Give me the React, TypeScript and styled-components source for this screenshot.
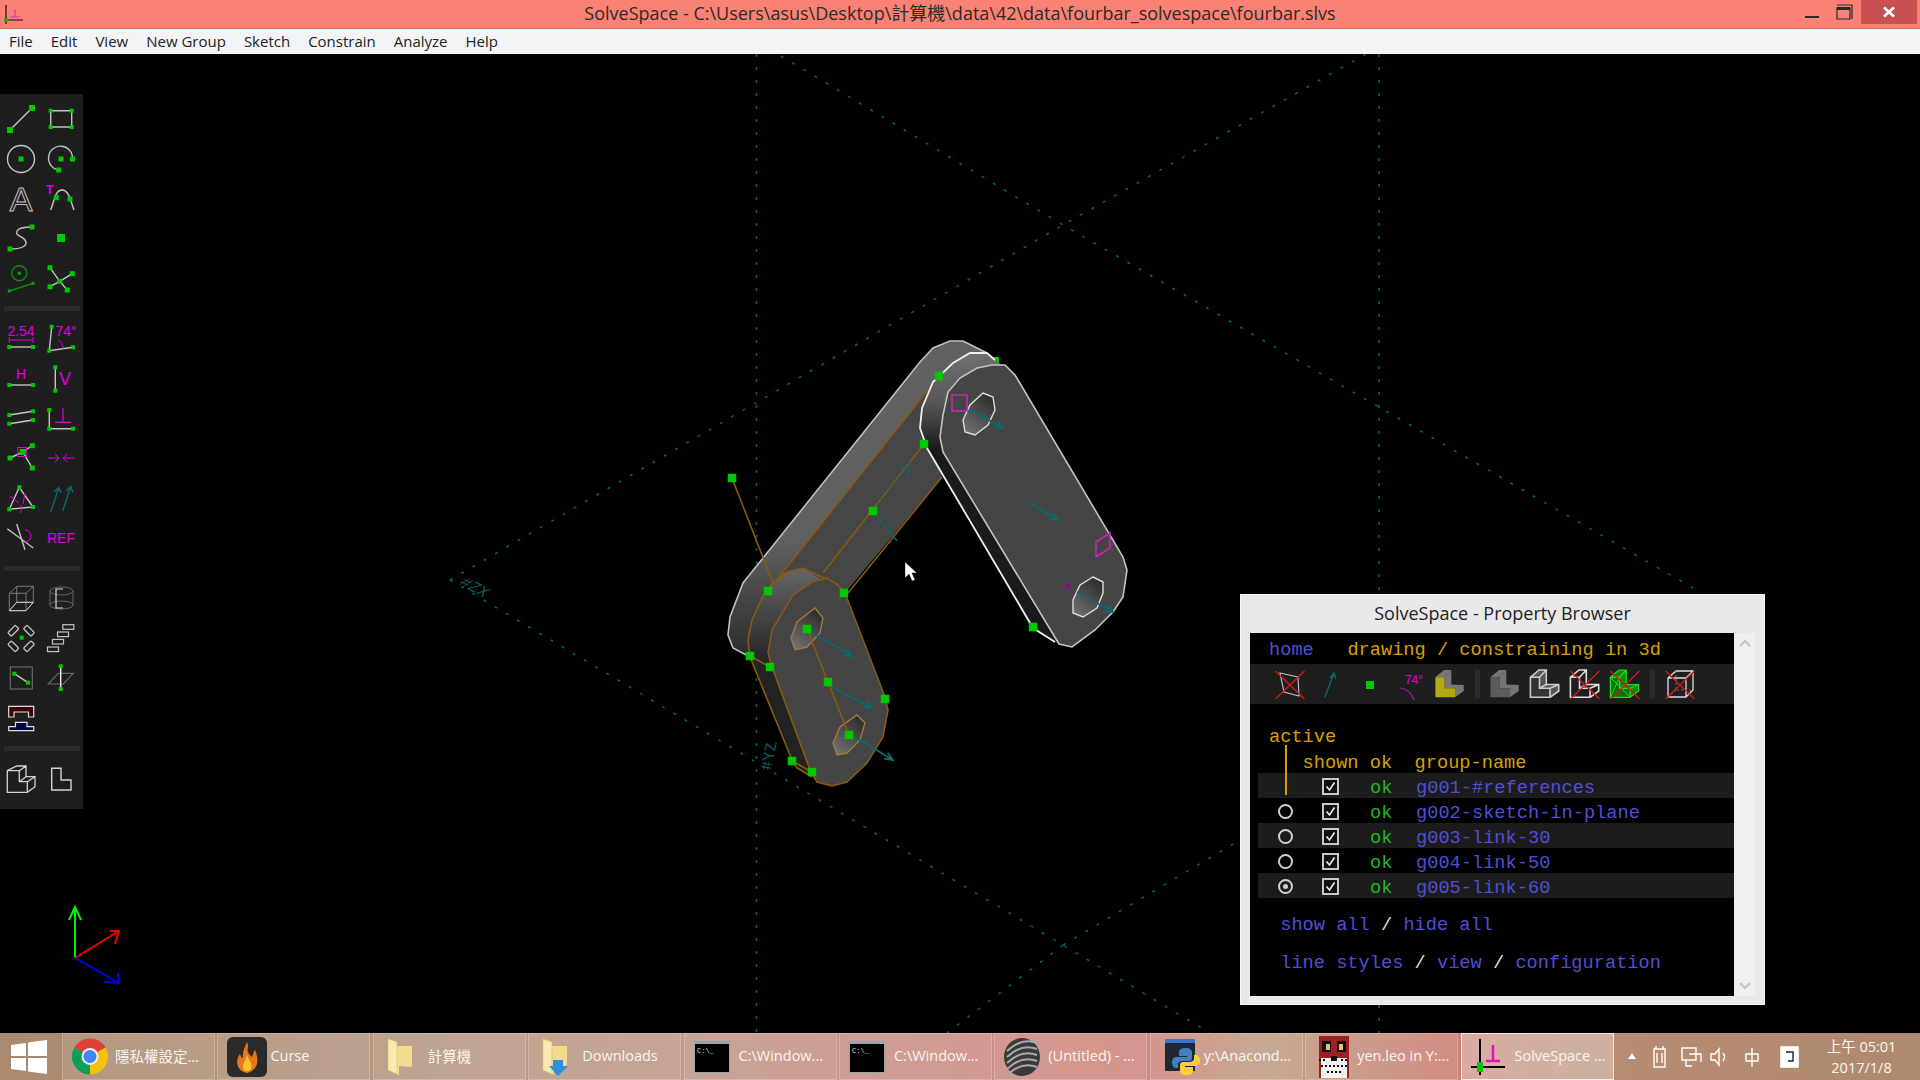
import { ReactNode } from "react";
import styled, { createGlobalStyle } from "styled-components";

const GlobalStyle = createGlobalStyle`
  html, body {
    margin: 0;
    padding: 0;
    background: #000;
    overflow: hidden;
  }
`;

const uiFont = `"Open Sans", "Noto Sans CJK TC", sans-serif`;
const GREEN = "#00c800";
const GRAY = "#c4c4c4";
const MAG = "#e000e0";
const TEAL = "#0b6b6e";
const ORANGE = "#8a5a12";

/* ---------- small svg helpers ---------- */

const Sq = ({ x, y, s = 6, c = GREEN }: { x: number; y: number; s?: number; c?: string }) => (
  <rect x={x - s / 2} y={y - s / 2} width={s} height={s} fill={c} />
);

const L = ({ d, c = GRAY, w = 1.4, dash }: { d: string; c?: string; w?: number; dash?: string }) => (
  <path d={d} fill="none" stroke={c} strokeWidth={w} strokeDasharray={dash} />
);

const Lbl = ({ x, y, size, children, c = MAG, bold }: { x: number; y: number; size: number; children: ReactNode; c?: string; bold?: boolean }) => (
  <text x={x} y={y} fontSize={size} fill={c} textAnchor="middle" fontFamily="'Liberation Sans', sans-serif" fontWeight={bold ? 700 : 400}>
    {children}
  </text>
);

const ToolSvg = styled.svg`
  width: 40px;
  height: 40px;
  display: block;
`;

const Tool = ({ children }: { children?: ReactNode }) => <ToolSvg viewBox="0 0 40 40">{children}</ToolSvg>;

/* ---------- toolbar icons, one row per pair ---------- */

const toolRows: ReactNode[][] = [
  [
    [
      <Tool key="line"><L d="M9 32L31 10" /><Sq x={9} y={32} /><Sq x={31} y={10} /></Tool>,
      <Tool key="rect"><L d="M9.7 12.7H30.7V29H9.7Z" /><Sq x={9.7} y={12.7} s={4} /><Sq x={30.7} y={12.7} s={4} /><Sq x={9.7} y={29} s={4} /><Sq x={30.7} y={29} s={4} /></Tool>,
    ],
    [
      <Tool key="circle"><circle cx={20} cy={21} r={13.5} fill="none" stroke={GRAY} strokeWidth={1.4} /><Sq x={20} y={21} s={5} /></Tool>,
      <Tool key="arc"><L d="M31.5 21A12 12 0 1 0 17.7 32" /><Sq x={20} y={21} s={5} /><Sq x={31.5} y={21} s={5} /><Sq x={17.7} y={32} s={5} /></Tool>,
    ],
    [
      <Tool key="text"><text x={20} y={33} fontSize={34} textAnchor="middle" fill="none" stroke={GRAY} strokeWidth={1} fontFamily="'Liberation Sans', sans-serif">A</text></Tool>,
      <Tool key="ttf"><L d="M9.7 32C13 24 14 12 21 12C28 12 30 24 33 32" /><Sq x={15.3} y={19.7} s={5} /><Sq x={29} y={21} s={5} /><Lbl x={9} y={16} size={12} bold>T</Lbl></Tool>,
    ],
    [
      <Tool key="spline"><L d="M9 31C20 31 28 28 24 22C20 17 14 18 16 13C18 9 26 9 31 9" /><Sq x={9} y={31} s={5} /><Sq x={31} y={9} s={5} /></Tool>,
      <Tool key="point"><Sq x={20} y={20} s={8} /></Tool>,
    ],
    [
      <Tool key="wplane"><circle cx={18.3} cy={15.3} r={7.5} fill="none" stroke="#0b8f0b" strokeWidth={1.4} /><Sq x={18.3} y={15.3} s={3} c="#0b9f0b" /><L d="M8.3 33L32 25.3" c="#0b8f0b" /><Sq x={8.3} y={33} s={3} c="#0b9f0b" /><Sq x={32} y={25.3} s={3} c="#0b9f0b" /></Tool>,
      <Tool key="split"><L d="M9 9.7L18.7 23.3L26.3 32M9 28.7L18.7 23.3L31.3 15.7" /><Sq x={18.7} y={23.3} s={5} /><Sq x={9} y={9.7} s={5} /><Sq x={31.3} y={15.7} s={5} /><Sq x={9} y={28.7} s={5} /><Sq x={26.3} y={32} s={5} /></Tool>,
    ],
  ],
  [
    [
      <Tool key="dist"><Lbl x={20} y={18} size={14}>2.54</Lbl><L d="M8.3 22H32M8.3 19V25M32 19V25" c={MAG} w={1} /><L d="M8.3 29H32" /><Sq x={8.3} y={29} s={4} /><Sq x={32} y={29} s={4} /></Tool>,
      <Tool key="angle"><L d="M10.7 8.7L8.3 32.7L32 29.3" /><L d="M17.3 22Q22 25 22.3 30.5" c={MAG} w={1} /><Sq x={10.7} y={8.7} s={4} /><Sq x={8.3} y={32.7} s={4} /><Sq x={32} y={29.3} s={4} /><Lbl x={25} y={18} size={14}>74°</Lbl></Tool>,
    ],
    [
      <Tool key="h"><Lbl x={20} y={21} size={14}>H</Lbl><L d="M8.3 27H32" /><Sq x={8.3} y={27} s={4} /><Sq x={32} y={27} s={4} /></Tool>,
      <Tool key="v"><L d="M14.3 9.3V32.7" /><Sq x={14.3} y={9.3} s={4} /><Sq x={14.3} y={32.7} s={4} /><Lbl x={24} y={27} size={18}>V</Lbl></Tool>,
    ],
    [
      <Tool key="par"><L d="M8.3 17L32 13.3M8.3 25.7L32 22" /><Sq x={8.3} y={17} s={4} /><Sq x={32} y={13.3} s={4} /><Sq x={8.3} y={25.7} s={4} /><Sq x={32} y={22} s={4} /></Tool>,
      <Tool key="perp"><L d="M8.3 12V30.7H32" /><L d="M14 24.3H30M22 10V24.3" c={MAG} w={1.2} /><Sq x={8.3} y={12} s={4} /><Sq x={8.3} y={30.7} s={4} /><Sq x={32} y={30.7} s={4} /></Tool>,
    ],
    [
      <Tool key="oncurve"><L d="M9 20L21.7 14L31.3 30M21.7 14L31.3 7.7" /><rect x={16.7} y={9.5} width={9} height={9} fill="none" stroke={MAG} strokeWidth={1} /><Sq x={21.7} y={14} s={6} /><Sq x={9} y={20} s={5} /><Sq x={31.3} y={7.7} s={5} /><Sq x={31.3} y={30} s={5} /></Tool>,
      <Tool key="equal"><L d="M6.7 20H18M14 16L18 20L14 24M33.7 20H22.3M26.3 16L22.3 20L26.3 24" c={MAG} w={1} /></Tool>,
    ],
    [
      <Tool key="tri"><L d="M18.3 9.3L8.3 31.3L32 29Z" /><L d="M9 18L18 25M24 15L22 26M20 27V35" c={MAG} w={1} /><Sq x={18.3} y={9.3} s={4} /><Sq x={8.3} y={31.3} s={4} /><Sq x={32} y={29} s={4} /></Tool>,
      <Tool key="para3d"><L d="M9.7 34.3L17.7 9.7M13 14L17.7 9.7L20 15M21.7 33L29.7 8.7M25 13L29.7 8.7L32 14.5" c={TEAL} w={1.4} /></Tool>,
    ],
    [
      <Tool key="other"><L d="M6.3 10.7L32.3 30M15.7 6L24 31.7" /><L d="M24 12A6 6 0 0 1 24 24" c={MAG} w={1} /></Tool>,
      <Tool key="ref"><Lbl x={20} y={25} size={14}>REF</Lbl></Tool>,
    ],
  ],
  [
    [
      <Tool key="cube"><L d="M8.3 15.3L15.7 8.3H32.3V24.3L25 32.7H8.3ZM8.3 15.3H25V32.7M25 15.3L32.3 8.3M15.7 8.3V24.3H32.3M15.7 24.3L8.3 32.7" c="#777" w={1} /><L d="M8.3 32.7H25L32.3 24.3H15.7Z" c="#d0d0d0" w={1} /></Tool>,
      <Tool key="cyl"><ellipse cx={20.5} cy={13} rx={11.5} ry={4} fill="none" stroke="#666" /><ellipse cx={20.5} cy={27} rx={11.5} ry={4} fill="none" stroke="#666" /><L d="M9 13V27M32 13V27" c="#666" w={1} /><L d="M22 11H15V30H22M15 18V23" c="#d8d8d8" w={1.2} /></Tool>,
    ],
    [
      <Tool key="near">
        {[[12.3, 12.7, 45], [28, 12.7, -45], [12.3, 28.3, -45], [28, 28.3, 45]].map(([x, y, r]) => (
          <rect key={`${x}${y}`} x={x - 2.5} y={y - 5.3} width={5} height={10.6} rx={1} fill="none" stroke={GRAY} strokeWidth={1.3} transform={`rotate(${r} ${x} ${y})`} />
        ))}
        <Sq x={20.7} y={19.7} s={4} />
      </Tool>,
      <Tool key="steps">
        {[[27.3, 9], [22, 16.3], [17, 23.7], [12, 31.3]].map(([x, y]) => (
          <rect key={x} x={x - 5.5} y={y - 2.3} width={11} height={4.6} fill="none" stroke={GRAY} strokeWidth={1.2} />
        ))}
      </Tool>,
    ],
    [
      <Tool key="inplane"><rect x={9.3} y={9} width={22} height={22} fill="none" stroke="#666" strokeWidth={1.2} /><L d="M13.3 15.7L27 24.7" /><Sq x={13.3} y={15.7} s={4} /><Sq x={27} y={24.7} s={4} /></Tool>,
      <Tool key="norm"><L d="M7.3 26L17.3 15.3H32.3L22.3 26Z" c="#666" w={1.2} /><L d="M19.7 8.3V31" c="#eee" /><Sq x={19.7} y={8.3} s={4} /><Sq x={19.7} y={31} s={4} /></Tool>,
    ],
    [
      <Tool key="bridge"><path d="M7.7 8.3H32.7V19H27.5V14H13V19H7.7Z" fill="#3a0404" stroke="#ddd" strokeWidth={1.2} /><path d="M7.7 32.7V28.7H14.5V24.3H26V28.7H32.7V32.7Z" fill="#050540" stroke="#ddd" strokeWidth={1.2} /></Tool>,
      <Tool key="empty" />,
    ],
  ],
  [
    [
      <Tool key="l3d"><L d="M6.3 12.7L15.7 8H25V18.7H34V28.7L26.3 34.3H6.3ZM6.3 12.7H18.3V23.7H26.3V34.3M18.3 12.7L25 8M18.3 23.7L25 18.7M26.3 23.7L34 18.7" c="#d4d4d4" w={1.3} /></Tool>,
      <Tool key="l2d"><L d="M10.7 10.3H20V22H30V32H10.7Z" c="#d4d4d4" w={1.4} /></Tool>,
    ],
  ],
];

/* ---------- property browser header icons ---------- */

const RedX = () => <L d="M5.5 7L34.5 35M34.5 7L5.5 35" c="#c81e1e" w={1.4} />;

const lFront = "M5.4 13.3H14.5V24.3H25V33.3H5.4Z";
const lSide = "M14.5 13.3L21.3 6V20.5L33.7 21V27L25 33.3V24.3H14.5Z";
const lTop = "M5.4 13.3L14 6H21.3L14.5 13.3Z";
const lEdges = `${lFront}M5.4 13.3L14 6H21.3V20.5H33.7V27L25 33.3M14.5 13.3L21.3 6M14.5 24.3L21.3 20.5M25 24.3L33.7 20.5`;

const SolidL = ({ front, side }: { front: string; side: string }) => (
  <>
    <path d={lSide} fill={side} />
    <path d={lTop} fill={side} />
    <path d={lFront} fill={front} />
  </>
);

const panelIcons: ReactNode[] = [
  <Tool key="a"><L d="M10 9L28 13L29 32L14 28Z" c="#bbb" w={1.2} /><RedX /></Tool>,
  <Tool key="b"><L d="M15 33L24 9M20 14L24 9L26 15" c={TEAL} w={1.4} /></Tool>,
  <Tool key="c"><Sq x={20} y={21} s={8} /></Tool>,
  <Tool key="d"><L d="M10 24Q20 25 24 36" c="#a020a0" w={1.2} /><Lbl x={24} y={20} size={12}>74°</Lbl></Tool>,
  <Tool key="e"><SolidL front="#b5a814" side="#777" /></Tool>,
  null,
  <Tool key="f"><SolidL front="#5c5c5c" side="#747474" /></Tool>,
  <Tool key="g"><SolidL front="#333" side="#555" /><L d={lEdges} c="#ccc" w={1.6} /></Tool>,
  <Tool key="h"><L d={lEdges} c="#ddd" w={1.6} /><RedX /></Tool>,
  <Tool key="i"><SolidL front="#0c6d0c" side="#0c8a0c" /><L d={lEdges} c="#22e022" w={1.2} /><L d="M5.4 13.3L25 33.3M14.5 13.3L5.4 33.3" c="#22e022" w={1} /><RedX /></Tool>,
  null,
  <Tool key="j"><L d="M8 14L16 7H33V26L26 33H8ZM8 14H26V33M26 14L33 7" c="#ddd" w={1.3} /><L d="M16 7V26H33M16 26L8 33" c="#777" w={1} dash="2 2" /><RedX /></Tool>,
];

/* ---------- taskbar icons ---------- */

const Chrome = () => (
  <svg width={36} height={37} viewBox="0 0 36 36">
    <path d="M2.4 9A18 18 0 0 1 33.6 9L18 18Z" fill="#db4437" />
    <path d="M33.6 9A18 18 0 0 1 18 36L18 18Z" fill="#f4c20d" />
    <path d="M18 36A18 18 0 0 1 2.4 9L18 18Z" fill="#0f9d58" />
    <circle cx={18} cy={18} r={8.5} fill="#eee" />
    <circle cx={18} cy={18} r={6.5} fill="#4285f4" />
  </svg>
);

const Curse = () => (
  <svg width={40} height={40} viewBox="0 0 40 40">
    <rect width={40} height={40} rx={6} fill="#2a2a2a" />
    <path d="M20 5C23 12 17 13 25 20C27 15 27 14 28 13C32 22 32 33 20 36C9 34 8 23 13 17C14 20 15 21 16 21C15 15 18 10 20 5Z" fill="#e8761c" />
    <path d="M20 18C22 24 26 26 24 32C22 35 17 35 16 31C15 26 19 24 20 18Z" fill="#fbc02d" />
  </svg>
);

const Folder = ({ arrow }: { arrow?: boolean }) => (
  <svg width={26} height={38} viewBox="0 0 26 38">
    <path d="M1 1L10 4V8L25 8V29L12 28V37L1 32Z" fill="#f2dc8c" />
    <path d="M1 1L10 4V36L1 32Z" fill="#f8eab0" stroke="#d8be6a" strokeWidth={0.6} />
    {arrow && <path d="M11 22H21V28H26L16 38L7 28H11Z" fill="#2f8fdc" />}
  </svg>
);

const Cmd = () => (
  <svg width={36} height={32} viewBox="0 0 36 32">
    <rect width={36} height={32} fill="#9aa4b0" />
    <rect x={1} y={3} width={34} height={28} fill="#000" />
    <text x={3} y={12} fontSize={7} fill="#ddd" fontFamily="'Liberation Mono', monospace">C:\_</text>
  </svg>
);

const Sphere = () => (
  <svg width={36} height={38} viewBox="0 0 36 38">
    <ellipse cx={18} cy={19} rx={18} ry={19} fill="#3a3a3a" />
    {[7, 13, 19, 25, 31].map((y) => (
      <path key={y} d={`M3 ${y + 6}Q18 ${y - 8} 33 ${y - 2}`} fill="none" stroke="#aaa" strokeWidth={2} />
    ))}
  </svg>
);

const Python = () => (
  <svg width={38} height={38} viewBox="0 0 38 38">
    <rect x={1} y={1} width={30} height={32} fill="#202838" />
    <rect x={1} y={1} width={30} height={4} fill="#3a72c8" />
    <path d="M22 10C16 10 15 12 15 15V18H23V19H12C9 19 8 22 8 25C8 28 10 30 12 30H14V27C14 24 16 23 19 23H25C27 23 28 22 28 20V15C28 12 26 10 22 10Z" fill="#3f7fbf" />
    <path d="M22 37C28 37 29 35 29 32V29H21V28H32C35 28 36 25 36 22C36 19 34 17 32 17H30V20C30 23 28 24 25 24H19C17 24 16 25 16 27V32C16 35 18 37 22 37Z" fill="#f7cf3e" />
  </svg>
);

const Cat = () => (
  <svg width={30} height={42} viewBox="0 0 30 42">
    <rect width={30} height={42} fill="#9c2020" />
    <rect x={3} y={5} width={9} height={11} fill="#111" />
    <rect x={18} y={5} width={9} height={11} fill="#111" />
    <rect x={7} y={8} width={4} height={6} fill="#e8c070" />
    <rect x={20} y={8} width={4} height={6} fill="#e8c070" />
    <rect x={2} y={22} width={26} height={20} fill="#f2f2f2" />
    <rect x={12} y={20} width={6} height={5} fill="#111" />
    <path d="M0 24H8M22 24H30M2 30H28M8 36H22" stroke="#111" strokeWidth={2} strokeDasharray="2 2" />
  </svg>
);

const SolveIcon = ({ big }: { big?: boolean }) =>
  big ? (
    <svg width={34} height={40} viewBox="0 0 34 40">
      <path d="M9 2V38M0 30H34" stroke="#000" strokeWidth={2} />
      <path d="M22 8V24M15 24H29" stroke="#e010c0" strokeWidth={2.5} />
      <rect x={6} y={25} width={6} height={10} fill={GREEN} />
    </svg>
  ) : (
    <svg width={24} height={24} viewBox="0 0 24 24">
      <path d="M6 4V23M6 19H23" stroke="#111" strokeWidth={1.2} fill="none" />
      <path d="M15 8V16M10 16H20" stroke="#e030d0" strokeWidth={1.2} fill="none" />
      <rect x={4} y={17.5} width={4} height={3} fill={GREEN} />
    </svg>
  );

/* ---------- the 3D scene ---------- */

const poly = (pts: string) => `M${pts.trim().split(/\s+/).join("L")}`;

const holeA = "983,393 993,397 995,410 988,425 975,435 965,432 963,420 970,405";
const holeB = "1093,577 1103,582 1103,593 1097,608 1083,617 1073,613 1073,600 1080,585";
const holeC = "815,608 823,618 820,633 807,647 795,650 791,638 797,622";
const holeD = "857,715 865,723 860,740 847,753 837,755 833,743 840,727";

const Arrow = ({ x1, y1, x2, y2 }: { x1: number; y1: number; x2: number; y2: number }) => {
  const a = Math.atan2(y2 - y1, x2 - x1);
  const h = (d: number) => `${x2 - 9 * Math.cos(a + d)},${y2 - 9 * Math.sin(a + d)}`;
  return <L d={`M${x1},${y1}L${x2},${y2}M${h(0.4)}L${x2},${y2}L${h(-0.4)}`} c={TEAL} w={1.8} />;
};

const Scene = () => (
  <SceneSvg viewBox="0 54 1920 979">
    <defs>
      <linearGradient id="bandA" gradientUnits="userSpaceOnUse" x1="0" y1="540" x2="0" y2="660">
        <stop offset="0" stopColor="#606060" />
        <stop offset="1" stopColor="#2a2a2a" />
      </linearGradient>
      <linearGradient id="bandB" gradientUnits="userSpaceOnUse" x1="0" y1="352" x2="0" y2="450">
        <stop offset="0" stopColor="#707070" />
        <stop offset="0.5" stopColor="#585858" />
        <stop offset="1" stopColor="#1a1a1a" />
      </linearGradient>
      <linearGradient id="bandC" gradientUnits="userSpaceOnUse" x1="0" y1="568" x2="0" y2="665">
        <stop offset="0" stopColor="#666" />
        <stop offset="1" stopColor="#222" />
      </linearGradient>
      <linearGradient id="hole" x1="0.8" y1="0" x2="0.2" y2="1">
        <stop offset="0" stopColor="#2a2a2a" />
        <stop offset="1" stopColor="#707070" />
      </linearGradient>
    </defs>

    <g stroke="#0c5c5c" strokeWidth={1.6} strokeDasharray="3 10" fill="none">
      <path d="M756.5 54V1033M1379 54V594M1379 1005V1033" />
      <path d="M450 580L1063 225L1366 54" />
      <path d="M781 56L1063 225L1700 592" />
      <path d="M450 580L1063 945L1210 1033" />
      <path d="M1063 945L1240 840M1063 945L947 1033" />
    </g>
    <text x={0} y={0} fontSize={16} fill="#0e5a5c" fontFamily="'Liberation Mono', monospace" transform="translate(458 584) rotate(28) skewX(-20)">#ZX</text>
    <text x={0} y={0} fontSize={16} fill="#0e5a5c" fontFamily="'Liberation Mono', monospace" transform="translate(771 770) rotate(-78) skewX(15)">#YZ</text>

    {/* link-50, the long one at the back */}
    <path d={`${poly("950,341 963,341 987,353 939,376 775,582 775,640 750,657 733,648 728,635 730,617 743,583 920,362 933,348")}Z`} fill="url(#bandA)" />
    <path d={`${poly("939,376 775,582 803,568 845,593 942,477 930,440")}Z`} fill="#464646" />
    <L d={poly("987,353 963,341 950,341 933,348 920,362 743,583 730,617 728,635 733,648 750,657")} c="#c0c0c0" w={1.6} />
    <L d={poly("939,376 775,582")} c={ORANGE} w={1.6} />
    <L d={poly("924,444 823,573")} c={ORANGE} w={1.6} />
    <L d={poly("942,477 848,593")} c={ORANGE} w={1.6} />
    <L d="M877 505L908 465" c={TEAL} w={1.2} dash="3 2" />
    <L d="M898 470L910 463L908 476" c={TEAL} w={1.2} />
    <L d="M877 517L897 541" c={TEAL} w={1.4} />
    <L d={poly("732,478 773,583")} c={ORANGE} w={1.6} />

    {/* link-60, on the right */}
    <Sq x={995} y={361} s={8} />
    <path d={`${poly("970,353 987,353 995,360 1015,375 1072,647 1059,644 1033,628 927,448 920,428 922,408 933,382 953,363")}Z`} fill="url(#bandB)" />
    <L d={poly("995,360 987,353 970,353 953,363 933,382 922,408 920,428 927,448 1033,628 1055,642")} c="#f0f0f0" w={1.8} />
    <path d={`${poly("992,365 1005,365 1015,375 1123,557 1127,570 1123,597 1113,612 1095,630 1072,647 1059,644 943,452 940,437 943,415 948,392 960,378 977,368")}Z`} fill="#454545" stroke="#c4c4c4" strokeWidth={1.6} />
    <path d={`${poly(holeA)}Z`} fill="url(#hole)" stroke="#ddd" strokeWidth={1.4} />
    <path d={`${poly(holeB)}Z`} fill="url(#hole)" stroke="#ddd" strokeWidth={1.4} />
    <rect x={952} y={395} width={15} height={16} fill="none" stroke="#d020c0" strokeWidth={1.6} />
    <path d="M1096 542L1110 533V548L1096 557Z" fill="none" stroke="#d020c0" strokeWidth={1.6} />
    <rect x={1065} y={584} width={5} height={5} fill="#8a0a8a" />
    <Arrow x1={969} y1={409} x2={1003} y2={428} />
    <Arrow x1={1032} y1={504} x2={1058} y2={520} />
    <Arrow x1={1077} y1={592} x2={1113} y2={612} />

    {/* link-30, lower left */}
    <path d={`${poly("803,568 787,572 773,583 762,598 752,620 748,640 750,657 792,760 797,768 812,777 830,700 840,590")}Z`} fill="url(#bandC)" />
    <L d={poly("838,585 803,568 787,572 773,583 762,598 752,620 748,640 750,657 792,760 797,768 812,777")} c={ORANGE} w={1.6} />
    <path d={`${poly("845,593 885,697 888,710 883,737 867,763 847,782 832,786 817,782 810,770 772,667 768,653 772,630 793,595 812,582 827,578 838,585")}Z`} fill="#454545" stroke={ORANGE} strokeWidth={1.6} />
    <L d="M750 656L770 667M792 761L812 772" c={ORANGE} w={1.6} />
    <path d={`${poly(holeC)}Z`} fill="url(#hole)" stroke="#a07a40" strokeWidth={1.4} />
    <path d={`${poly(holeD)}Z`} fill="url(#hole)" stroke="#a07a40" strokeWidth={1.4} />
    <L d={poly("807,629 849,735")} c={ORANGE} w={1.6} />
    <Arrow x1={811} y1={632} x2={852} y2={656} />
    <Arrow x1={832} y1={687} x2={872} y2={708} />
    <Arrow x1={855} y1={737} x2={893} y2={760} />

    {[
      [732, 478], [939, 376], [924, 444], [873, 511], [1033, 627], [768, 591], [844, 593], [750, 656],
      [770, 667], [807, 629], [828, 682], [885, 699], [849, 735], [792, 761], [812, 772],
    ].map(([x, y]) => (
      <Sq key={`${x}-${y}`} x={x} y={y} s={8.5} />
    ))}

    <path d="M905 562V578L909 574L912 581L915 580L912 573L917 573Z" fill="#fff" stroke="#000" strokeWidth={0.4} />

    {/* axes */}
    <L d="M75 958V907M69 920L75 907L81 920" c="#00f000" w={2} />
    <L d="M75 958L119 931M110 931H119L115 944" c="#f00000" w={2} />
    <L d="M75 958L119 983M104 982L119 983L118 973" c="#0000f0" w={2} />
  </SceneSvg>
);

/* ---------- page ---------- */

const menuItems = ["File", "Edit", "View", "New Group", "Sketch", "Constrain", "Analyze", "Help"];

const groups = [
  { name: "g001-#references", radio: null },
  { name: "g002-sketch-in-plane", radio: "off" },
  { name: "g003-link-30", radio: "off" },
  { name: "g004-link-50", radio: "off" },
  { name: "g005-link-60", radio: "on" },
];

const taskItems: { label: string; icon: ReactNode; active?: boolean; gap: number; pad?: number }[] = [
  { label: "隱私權設定...", icon: <Chrome />, gap: 7 },
  { label: "Curse", icon: <Curse />, gap: 3 },
  { label: "計算機", icon: <Folder />, gap: 15, pad: 13 },
  { label: "Downloads", icon: <Folder arrow />, gap: 14, pad: 13 },
  { label: "C:\\Window...", icon: <Cmd />, gap: 9 },
  { label: "C:\\Window...", icon: <Cmd />, gap: 9 },
  { label: "(Untitled) - ...", icon: <Sphere />, gap: 8 },
  { label: "y:\\Anacond...", icon: <Python />, gap: 2, pad: 13 },
  { label: "yen.leo in Y:...", icon: <Cat />, gap: 8, pad: 13 },
  { label: "SolveSpace ...", icon: <SolveIcon big />, active: true, gap: 10 },
];

export default function App() {
  return (
    <Page>
      <GlobalStyle />
      <TitleBar>
        <TitleIcon><SolveIcon /></TitleIcon>
        <TitleText>SolveSpace - C:\Users\asus\Desktop\計算機\data\42\data\fourbar_solvespace\fourbar.slvs</TitleText>
        <WindowButtons>
          <svg width={56} height={24} viewBox="0 0 56 24">
            <path d="M0 17H14" stroke="#2a2a2a" strokeWidth={2} />
            <path d="M32 5H47V19M32 8H45V19H32Z" stroke="#2a2a2a" strokeWidth={1.2} fill="none" />
            <rect x={32} y={7} width={13} height={3} fill="#2a2a2a" />
          </svg>
          <CloseButton>
            <svg width={12} height={12} viewBox="0 0 12 12">
              <path d="M1 1.5L11 10.5M11 1.5L1 10.5" stroke="#fff" strokeWidth={2.6} />
            </svg>
          </CloseButton>
        </WindowButtons>
      </TitleBar>
      <MenuBar>
        {menuItems.map((m) => (
          <MenuItem key={m}>{m}</MenuItem>
        ))}
      </MenuBar>

      <Canvas>
        <Scene />

        <Toolbar>
          {toolRows.map((section, i) => (
            <ToolSection key={i}>
              {i > 0 && <ToolSeparator />}
              {section.map((row, j) => (
                <ToolRow key={j}>{row}</ToolRow>
              ))}
            </ToolSection>
          ))}
        </Toolbar>

        <BrowserWindow>
          <BrowserTitle>SolveSpace - Property Browser</BrowserTitle>
          <BrowserBody>
            <TextPanel>
              <ActiveLine />
              <TextRow $shift={1}>
                <Link>home</Link>
                <Head>{"   drawing / constraining in 3d"}</Head>
              </TextRow>
              <IconBar>
                {panelIcons.map((icon, i) => (icon ? <span key={i}>{icon}</span> : <IconSeparator key={i} />))}
              </IconBar>
              <ActiveRow $shift={1.2}>
                <Head>active</Head>
              </ActiveRow>
              <TextRow $shift={2.5}>
                <Head>{"   shown ok  group-name"}</Head>
              </TextRow>
              {groups.map((g, i) => (
                <GroupRow key={g.name} $alt={i % 2 === 0}>
                  <RadioSlot>{g.radio && <Radio $on={g.radio === "on"} />}</RadioSlot>
                  <CheckSlot>
                    <svg width={17} height={17} viewBox="0 0 17 17">
                      <rect x={1} y={1} width={15} height={15} fill="#111" stroke="#c8c8c8" strokeWidth={2} />
                      <path d="M4.5 8.5L7.5 12L12.5 4.5" fill="none" stroke="#eee" strokeWidth={1.6} />
                    </svg>
                  </CheckSlot>
                  <OkCell>ok</OkCell>
                  <Link>{g.name}</Link>
                </GroupRow>
              ))}
              <LinkRow $top={14.5}>
                <Link>{" show all"}</Link> <Slash>/</Slash> <Link>hide all</Link>
              </LinkRow>
              <LinkRow $top={13}>
                <Link>{" line styles"}</Link> <Slash>/</Slash> <Link>view</Link> <Slash>/</Slash> <Link>configuration</Link>
              </LinkRow>
            </TextPanel>
            <ScrollTrack>
              <svg width={12} height={8} viewBox="0 0 12 8"><path d="M1 7L6 2L11 7" fill="none" stroke="#c4c4c4" strokeWidth={2} /></svg>
              <svg width={12} height={8} viewBox="0 0 12 8"><path d="M1 1L6 6L11 1" fill="none" stroke="#c4c4c4" strokeWidth={2} /></svg>
            </ScrollTrack>
          </BrowserBody>
        </BrowserWindow>
      </Canvas>

      <Taskbar>
        <StartButton>
          <svg width={36} height={34} viewBox="0 0 36 34">
            <path d="M0 5L15 3V16H0ZM17 2.6L36 0V16H17ZM0 18H15V31L0 29ZM17 18H36V34L17 31.4Z" fill="#fff" />
          </svg>
        </StartButton>
        <TaskItems>
          {taskItems.map((t, i) => (
            <TaskButton key={i} $active={t.active} $gap={t.gap} $pad={t.pad ?? 9}>
              <TaskIcon>{t.icon}</TaskIcon>
              <TaskLabel>{t.label}</TaskLabel>
            </TaskButton>
          ))}
        </TaskItems>
        <Tray>
          <svg width={176} height={28} viewBox="0 0 176 28">
            <path d="M0 16L4 10L8 16Z" fill="#fff" />
            <g fill="none" stroke="#fff" strokeWidth={1.4}>
              <rect x={26} y={6} width={11} height={18} />
              <path d="M28 6V3M35 6V3M29 10V20M34 10V20" />
              <rect x={54} y={5} width={14} height={12} />
              <path d="M58 17V23H64M61 11H73V19" />
              <path d="M83 11H87L91 6V22L87 17H83ZM95 10Q98 14 95 18" />
              <path d="M118 11H130V18H118ZM124 5V24" />
              <rect x={153} y={4} width={17} height={20} strokeWidth={1.6} fill="#fff" />
              <path d="M158 9H165V18H160" stroke="#222" strokeWidth={1.4} />
            </g>
          </svg>
          <Clock>
            <span>上午 05:01</span>
            <span>2017/1/8</span>
          </Clock>
        </Tray>
      </Taskbar>
    </Page>
  );
}

const Page = styled.div`
  width: 1920px;
  height: 1080px;
  display: flex;
  flex-direction: column;
  overflow: hidden;
  font-family: ${uiFont};
`;

const TitleBar = styled.div`
  height: 28px;
  flex: none;
  position: relative;
  display: flex;
  align-items: center;
  justify-content: center;
  background: #f98274;
  border-bottom: 1px solid #d96e64;
`;

const TitleIcon = styled.div`
  position: absolute;
  left: 0;
  top: 1px;
  height: 24px;
`;

const TitleText = styled.div`
  font-size: 18px;
  line-height: 26px;
  margin-bottom: 2px;
  color: #2b2b2b;
  white-space: pre;
`;

const WindowButtons = styled.div`
  position: absolute;
  right: 3px;
  top: 0;
  display: flex;
`;

const CloseButton = styled.div`
  width: 56px;
  height: 24px;
  background: #c75050;
  display: flex;
  align-items: center;
  justify-content: center;
`;

const MenuBar = styled.div`
  height: 25px;
  flex: none;
  box-sizing: border-box;
  padding: 0 0 2px 9px;
  display: flex;
  align-items: center;
  gap: 18px;
  background: #f3f4f6;
`;

const MenuItem = styled.span`
  font-size: 15px;
  color: #222;
`;

const Canvas = styled.div`
  flex: 1;
  min-height: 0;
  position: relative;
  background: #000;
`;

const SceneSvg = styled.svg`
  display: block;
  width: 100%;
  height: 100%;
`;

const Toolbar = styled.div`
  position: absolute;
  left: 0;
  top: 40px;
  width: 83px;
  height: 715px;
  box-sizing: border-box;
  padding-top: 4px;
  background: #1e1e1e;
`;

const ToolSection = styled.div`
  display: flex;
  flex-direction: column;
`;

const ToolRow = styled.div`
  display: flex;
  padding-left: 1px;
`;

const ToolSeparator = styled.div`
  height: 5px;
  margin: 8px 3px 7px 4px;
  background: #2b2b2b;
`;

const BrowserWindow = styled.div`
  position: absolute;
  left: 1240px;
  top: 540px;
  width: 525px;
  height: 411px;
  box-sizing: border-box;
  background: #e9e9e9;
  border: 1px solid #f6f6f6;
  display: flex;
  flex-direction: column;
`;

const BrowserTitle = styled.div`
  height: 36px;
  margin-bottom: 2px;
  flex: none;
  display: flex;
  align-items: center;
  justify-content: center;
  font-size: 18px;
  color: #222;
`;

const BrowserBody = styled.div`
  height: 363px;
  margin: 0 9px;
  display: flex;
`;

const TextPanel = styled.div`
  position: relative;
  width: 484px;
  box-sizing: border-box;
  padding-top: 4px;
  background: #000;
  font-family: "Liberation Mono", monospace;
  font-size: 18.66px;
  line-height: 25px;
  white-space: pre;
`;

const ActiveLine = styled.div`
  position: absolute;
  left: 35px;
  top: 112px;
  width: 1.5px;
  height: 50px;
  background: #d8a000;
`;

const TextRow = styled.div<{ $shift?: number }>`
  height: 25px;
  padding-left: 19px;
  line-height: ${(p) => 25 + 2 * (p.$shift ?? 0)}px;
`;

const ActiveRow = styled(TextRow)`
  height: 24px;
  margin-top: 20px;
`;

const Link = styled.span`
  color: #4f4fd6;
`;

const Head = styled.span`
  color: #d8a000;
`;

const Slash = styled.span`
  color: #ddd;
`;

const IconBar = styled.div`
  height: 40px;
  margin-top: 2px;
  padding-left: 20px;
  display: flex;
  background: #1e1e1e;
`;

const IconSeparator = styled.div`
  width: 15px;
  position: relative;
  &::after {
    content: "";
    position: absolute;
    left: 5px;
    top: 5px;
    bottom: 5px;
    width: 5px;
    background: #2b2b2b;
  }
`;

const GroupRow = styled.div<{ $alt: boolean }>`
  height: 25px;
  margin-left: 7.6px;
  display: flex;
  align-items: flex-start;
  line-height: 30px;
  background: ${(p) => (p.$alt ? "#1c1c1c" : "transparent")};
`;

const RadioSlot = styled.div`
  width: 55px;
  height: 15px;
  margin-top: 6px;
  display: flex;
  justify-content: center;
`;

const Radio = styled.div<{ $on: boolean }>`
  width: 15px;
  height: 15px;
  box-sizing: border-box;
  border-radius: 50%;
  border: 2.4px solid #d0d0d0;
  display: flex;
  align-items: center;
  justify-content: center;
  &::after {
    content: "";
    width: 5px;
    height: 5px;
    border-radius: 50%;
    background: ${(p) => (p.$on ? "#d0d0d0" : "transparent")};
  }
`;

const CheckSlot = styled.div`
  width: 36px;
  height: 17px;
  margin-top: 5px;
  display: flex;
  justify-content: center;
`;

const OkCell = styled.span`
  width: 46px;
  margin-left: 21.4px;
  color: #22b522;
`;

const LinkRow = styled(TextRow)<{ $top: number }>`
  margin-top: ${(p) => p.$top}px;
`;

const ScrollTrack = styled.div`
  width: 21px;
  background: #f0f0f0;
  display: flex;
  flex-direction: column;
  justify-content: space-between;
  align-items: center;
  padding: 6px 0;
  box-sizing: border-box;
`;

const Taskbar = styled.div`
  height: 47px;
  flex: none;
  display: flex;
  align-items: stretch;
  background: linear-gradient(90deg, #a98a70 0%, #b69a84 22%, #c09a8a 35%, #cc8f85 50%, #d08a80 60%, #bfa088 66%, #cc8278 75%, #b88d74 82%, #ae8a70 100%);
`;

const StartButton = styled.div`
  width: 62px;
  flex: none;
  display: flex;
  align-items: center;
  justify-content: center;
  padding-right: 4px;
  box-sizing: border-box;
`;

const TaskItems = styled.div`
  display: flex;
  gap: 2.4px;
`;

const TaskButton = styled.div<{ $active?: boolean; $gap: number; $pad: number }>`
  width: 153px;
  box-sizing: border-box;
  display: flex;
  align-items: center;
  gap: ${(p) => p.$gap}px;
  padding-left: ${(p) => p.$pad}px;
  overflow: hidden;
  background: ${(p) => (p.$active ? "rgba(255,255,255,.32)" : "rgba(255,255,255,.1)")};
  border: 1px solid ${(p) => (p.$active ? "rgba(255,255,255,.75)" : "rgba(255,255,255,.22)")};
`;

const TaskIcon = styled.div`
  flex: none;
  display: flex;
  align-items: center;
`;

const TaskLabel = styled.span`
  font-size: 14.5px;
  margin-bottom: 3px;
  color: #fbf5f0;
  white-space: nowrap;
`;

const Tray = styled.div`
  flex: 1;
  display: flex;
  align-items: center;
  padding-left: 14px;
`;

const Clock = styled.div`
  width: 100px;
  margin-left: 8px;
  display: flex;
  flex-direction: column;
  align-items: center;
  gap: 2px;
  font-size: 14.5px;
  line-height: 19px;
  color: #fbf5f0;
`;
